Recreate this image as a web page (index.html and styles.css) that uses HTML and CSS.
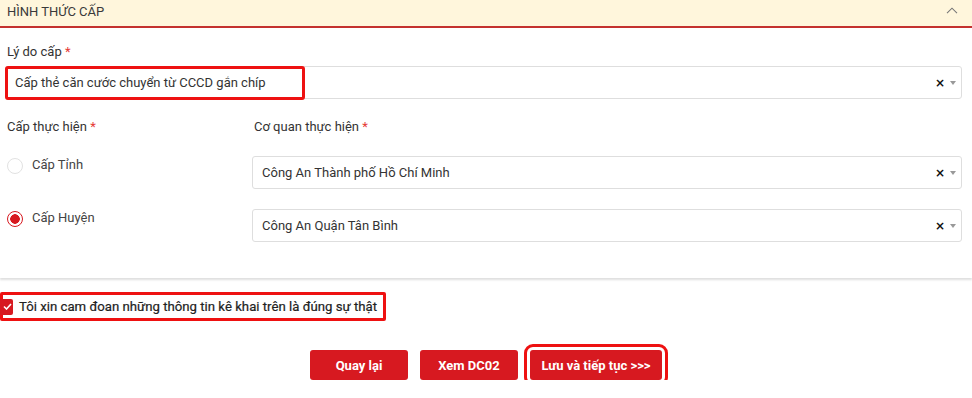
FILE: index.html
```html
<!DOCTYPE html>
<html lang="vi">
<head>
<meta charset="utf-8">
<link rel="stylesheet" href="styles.css">
</head>
<body>
<section class="panel">
  <header class="panel-head">
    <span class="panel-title">HÌNH THỨC CẤP</span>
    <svg class="chev" width="12" height="7" viewBox="0 0 12 7"><path d="M1 6.2 L6 1.2 L11 6.2" fill="none" stroke="#777" stroke-width="1.1"/></svg>
  </header>
  <div class="panel-body">
    <div class="field-label">Lý do cấp <span class="req">*</span></div>
    <div class="select">
      <span class="select-text">Cấp thẻ căn cước chuyển từ CCCD gắn chíp</span>
      <span class="select-icons"><span class="clear">×</span><span class="caret"></span></span>
      <span class="mark mark-reason"></span>
    </div>
    <div class="grid">
      <div class="field-label">Cấp thực hiện <span class="req">*</span></div>
      <div class="field-label">Cơ quan thực hiện <span class="req">*</span></div>
      <label class="radio"><span class="radio-dot"></span><span>Cấp Tỉnh</span></label>
      <div class="select">
        <span class="select-text">Công An Thành phố Hồ Chí Minh</span>
        <span class="select-icons"><span class="clear">×</span><span class="caret"></span></span>
      </div>
      <label class="radio"><span class="radio-dot checked"></span><span>Cấp Huyện</span></label>
      <div class="select">
        <span class="select-text">Công An Quận Tân Bình</span>
        <span class="select-icons"><span class="clear">×</span><span class="caret"></span></span>
      </div>
    </div>
  </div>
</section>
<div class="agree">
  <span class="checkbox"><svg width="9" height="7" viewBox="0 0 9 7"><path d="M1 3.5 L3.5 6 L8 1" fill="none" stroke="#fff" stroke-width="1.6"/></svg></span>
  <span class="agree-text">Tôi xin cam đoan những thông tin kê khai trên là đúng sự thật</span>
</div>
<div class="actions">
  <button class="btn">Quay lại</button>
  <button class="btn">Xem DC02</button>
  <button class="btn btn-marked">Lưu và tiếp tục &gt;&gt;&gt;</button>
</div>
</body>
</html>
```
FILE: styles.css
```css
* { box-sizing: border-box; }
html, body { margin: 0; background: #fff; }
body {
  font-family: Roboto, "Noto Sans", "Liberation Sans", sans-serif;
  font-size: 13px;
  color: #333;
  overflow: hidden;
}
.panel {
  background: #fff;
  box-shadow: 0 2px 2px rgba(0,0,0,0.13);
}
.panel-head {
  height: 28px;
  background: #fff6dc;
  border-bottom: 2px solid #c4312e;
  display: flex;
  align-items: center;
  justify-content: space-between;
  padding: 0 14px 2px 7px;
}
.panel-title { font-size: 13px; color: #3a3a3a; line-height: 18px; }
.chev { display: block; margin-top: -3px; }
.panel-body { padding: 15px 10px 36px 5px; }
.field-label {
  line-height: 18px;
  color: #333;
  padding-left: 2px;
  margin-bottom: 5px;
}
.req { color: #e53935; }
.select {
  position: relative;
  height: 33px;
  border: 1px solid #dedede;
  border-radius: 3px;
  display: flex;
  align-items: center;
  justify-content: space-between;
  padding: 0 5px 0 9px;
  color: #333;
}
.select-icons { display: flex; align-items: center; gap: 5px; }
.clear { font-weight: 700; font-size: 12px; color: #111; line-height: 1; font-family: "DejaVu Sans", sans-serif; }
.caret {
  width: 0; height: 0;
  border-left: 3.5px solid transparent;
  border-right: 3.5px solid transparent;
  border-top: 4px solid #999;
}
.mark { position: absolute; border: 3px solid #ee1111; border-radius: 3px; pointer-events: none; }
.mark-reason { left: -1px; top: -1px; width: 300px; height: 34px; }
.grid {
  display: grid;
  grid-template-columns: 247px 1fr;
  row-gap: 20px;
  margin-top: 19px;
}
.grid .field-label { margin-bottom: 0; }
.radio {
  display: flex;
  align-items: center;
  gap: 9px;
  padding-top: 2px;
  padding-left: 2px;
  align-self: start;
  color: #444;
  line-height: 16px;
}
.radio span:last-child { margin-top: -2px; }
.radio-dot {
  width: 16px; height: 16px;
  border-radius: 50%;
  border: 1px solid #e2e2e2;
  background: #fff;
  flex: none;
}
.radio-dot.checked {
  border: 1.5px solid #d71920;
  background: radial-gradient(circle, #d71920 0 4.5px, #fff 5px);
}
.agree {
  display: flex;
  align-items: center;
  gap: 6px;
  height: 29px;
  width: 386px;
  margin-top: 14px;
  border: 3px solid #ee1111;
  border-radius: 2px;
  padding-left: 0;
}
.checkbox {
  width: 16px; height: 16px;
  margin-left: -6px;
  background: #d71920;
  border-radius: 2px;
  display: flex; align-items: center; justify-content: center;
  padding-left: 4px;
  flex: none;
}
.agree-text { font-size: 13.2px; color: #222; font-weight: 400; white-space: nowrap; letter-spacing: 0; -webkit-text-stroke: 0.2px #222; }
.actions {
  display: flex;
  justify-content: center;
  gap: 12px;
  margin-top: 29px;
  padding-left: 0;
}
.btn {
  height: 30px;
  min-width: 98px;
  padding: 0 10px;
  border: none;
  border-radius: 3px;
  background: #d71920;
  color: #fff;
  font-family: Roboto, "Liberation Sans", sans-serif;
  font-weight: 700;
  font-size: 13px;
}
.btn-marked {
  outline: 3px solid #ee1111;
  outline-offset: 3px;
  min-width: 132px;
}
```
